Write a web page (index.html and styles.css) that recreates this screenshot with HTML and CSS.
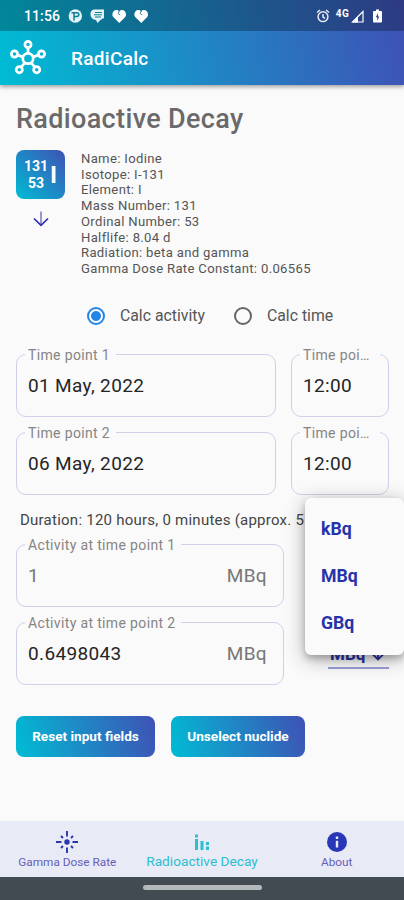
FILE: index.html
```html
<!DOCTYPE html>
<html lang="en">
<head>
<meta charset="utf-8">
<title>RadiCalc</title>
<link rel="stylesheet" href="styles.css">
</head>
<body>
<div class="app">
  <header class="top">
    <div class="status">
      <span class="clock">11:56</span>
      <svg class="notices" width="82" height="16" viewBox="0 0 82 16">
        <circle cx="7.3" cy="8" r="6.7" fill="#e4f3f6"/>
        <path d="M6 12.500V4.800M3.500 4.800H9a1.800 1.800 0 0 1 0 3.600H6" fill="none" stroke="#0d7f95" stroke-width="1.500"/>
        <path d="M26 1.5h10v8.500l-3 1.500-3.500 3.500-1.500-3c-7 0-7-10.500-2-10.500z" fill="#e4f3f6"/>
        <path d="M27 4.500h7M26 6.800h8M27 9h6" stroke="#0d7f95" stroke-width="1"/>
        <path d="M51.200 15l-6-6c-3-4 2.500-9.500 6-5.500 3.500-4 9 1.500 6 5.500z" fill="#fff"/>
        <path d="M73.200 15l-6-6c-3-4 2.500-9.500 6-5.500 3.500-4 9 1.500 6 5.500z" fill="#fff"/>
        <path d="M51.200 3l-1 2.500 2 1.500M73.200 3l-1 2.500 2 1.500" fill="none" stroke="#247d9b" stroke-width=".9"/>
      </svg>
      <svg class="alarm" width="14" height="14" viewBox="0 0 14 14" fill="none" stroke="#e8eaf6" stroke-width="1.500">
        <circle cx="7" cy="7.700" r="4.900"/><path d="M1 3.500l3-2.500M13 3.500l-3-2.500M7 5v3l2 1.300"/>
      </svg>
      <span class="net">4G</span>
      <svg class="signal" width="13" height="13" viewBox="0 0 13 13">
        <path d="M1.500 12L12 1.500V12z" fill="none" stroke="#fff" stroke-width="1.200"/><path d="M1 12.500L7 6.500v6z" fill="#fff"/>
      </svg>
      <svg class="battery" width="9" height="14" viewBox="0 0 9 14">
        <path d="M1 2h2V.5h3V2h2q1 0 1 1v9.500q0 1-1 1H1q-1 0-1-1V3q0-1 1-1z" fill="#fff"/><path d="M5 4L2.800 8.200h1.500V12l2-4.500H5z" fill="#2f4185"/>
      </svg>
    </div>
    <div class="bar">
      <svg class="logo" width="36" height="36" viewBox="0 0 36 36" fill="none" stroke="#fff" stroke-width="2.700">
        <circle cx="18" cy="18.500" r="5.200"/>
        <circle cx="18" cy="4.500" r="3.100"/><circle cx="4.500" cy="14" r="3.100"/><circle cx="31.500" cy="14" r="3.100"/>
        <circle cx="9.300" cy="29.700" r="3.100"/><circle cx="26.700" cy="29.700" r="3.100"/>
        <path d="M18 7.800v5.600M7.600 15.100l5.500 1.800M28.400 15.100L22.900 16.900M11.200 27.100l3.700-4.500M24.800 27.100l-3.700-4.500"/>
      </svg>
      <span class="brand">RadiCalc</span>
    </div>
  </header>

  <main class="page">
    <h1>Radioactive Decay</h1>
    <section class="nuclide">
      <div class="pick">
        <div class="tile"><div class="nums"><span>131</span><span>53</span></div><b>I</b></div>
        <svg width="16" height="16" viewBox="0 0 16 16" fill="none" stroke-width="1.700"><path d="M8 .5v13" stroke="#8583cf"/><path d="M1 7.500l7 6.800 7-6.800" stroke="#2e2eb3"/></svg>
      </div>
      <ul class="facts">
        <li>Name: Iodine</li>
        <li>Isotope: I-131</li>
        <li>Element: I</li>
        <li>Mass Number: 131</li>
        <li>Ordinal Number: 53</li>
        <li>Halflife: 8.04 d</li>
        <li>Radiation: beta and gamma</li>
        <li>Gamma Dose Rate Constant: 0.06565</li>
      </ul>
    </section>

    <div class="modes">
      <span class="radio on"></span><span class="mode first">Calc activity</span>
      <span class="radio"></span><span class="mode">Calc time</span>
    </div>

    <div class="row">
      <fieldset class="date"><legend>Time point 1</legend><div class="value">01 May, 2022</div></fieldset>
      <fieldset class="time"><legend>Time poi…</legend><div class="value">12:00</div></fieldset>
    </div>
    <div class="row">
      <fieldset class="date"><legend>Time point 2</legend><div class="value">06 May, 2022</div></fieldset>
      <fieldset class="time"><legend>Time poi…</legend><div class="value">12:00</div></fieldset>
    </div>

    <p class="duration">Duration: 120 hours, 0 minutes (approx. 5</p>

    <div class="row">
      <fieldset class="activity"><legend>Activity at time point 1</legend><div class="value hint"><span>1</span><span class="unit">MBq</span></div></fieldset>
    </div>
    <div class="row">
      <fieldset class="activity"><legend>Activity at time point 2</legend><div class="value"><span>0.6498043</span><span class="unit">MBq</span></div></fieldset>
      <div class="select">
        <span>MBq</span>
        <svg width="14" height="14" viewBox="0 0 14 14" fill="none" stroke="#2733a8" stroke-width="1.800"><path d="M7 0v12M1 6.500l6 6 6-6"/></svg>
        <div class="menu"><span>kBq</span><span>MBq</span><span>GBq</span></div>
      </div>
    </div>

    <div class="actions">
      <div class="btn reset">Reset input fields</div>
      <div class="btn unselect">Unselect nuclide</div>
    </div>
  </main>

  <nav class="tabs">
    <div class="tab">
      <svg width="24" height="24" viewBox="0 0 24 24" fill="none" stroke="#2737ad" stroke-width="1.900"><circle cx="12" cy="12" r="2.700" fill="#2737ad" stroke="none"/><path d="M12 1v5.500M12 17.500V23M1 12h5.500M17.500 12H23M6 6l2 2M18 6l-2 2M6 18l2-2M18 18l-2-2"/></svg>
      <span class="t1">Gamma Dose Rate</span>
    </div>
    <div class="tab current">
      <svg width="24" height="24" viewBox="0 0 24 24" fill="#2bbfd0"><path d="M5 9h3v11H5zM5 4.500h3v3H5zM10.500 11h3v9h-3zM16 12h3v3h-3zM16 16.500h3V20h-3z"/></svg>
      <span class="t2">Radioactive Decay</span>
    </div>
    <div class="tab">
      <svg width="24" height="24" viewBox="0 0 24 24"><circle cx="12" cy="12" r="10" fill="#2737b5"/><path d="M10.800 6.500h2.400v2.400h-2.400zM10.800 10.800h2.400v6.700h-2.400z" fill="#e8eaf6"/></svg>
      <span class="t3">About</span>
    </div>
  </nav>
  <footer class="gesture"><span></span></footer>
</div>
</body>
</html>
```
FILE: styles.css
```css
* { box-sizing: border-box; }
body { margin: 0; font-family: Roboto, "Liberation Sans", sans-serif; }
.app { width: 404px; height: 900px; display: flex; flex-direction: column; background: #fafafa; overflow: hidden; }

.top { flex: none; height: 85px; background: linear-gradient(78deg, #00bcd4, #3f51b5); box-shadow: 0 2px 4px rgba(0,0,0,.35); color: #fff; }
.status { height: 31px; background: rgba(0,0,0,.27); display: flex; align-items: center; padding: 1px 22px 0 24px; }
.clock { width: 44px; font-size: 14px; font-weight: 500; letter-spacing: .1px; white-space: nowrap; }
.alarm { margin-left: auto; }
.net { font-size: 10px; font-weight: 700; margin: -6px 2px 0 6px; letter-spacing: .3px; }
.battery { margin-left: 9px; }
.bar { height: 54px; display: flex; align-items: center; padding: 0 10px; }
.brand { margin: 1px 0 0 25px; font-size: 19px; font-weight: 500; letter-spacing: .3px; }

.page { flex: 1; padding: 0 15px 0 16px; display: flex; flex-direction: column; }
h1 { margin: 18px 0 0; height: 33px; font-size: 27px; line-height: 33px; font-weight: 500; letter-spacing: .35px; color: #6a6a6a; white-space: nowrap; }
.nuclide { margin-top: 14px; display: flex; gap: 16px; }
.pick { width: 49px; display: flex; flex-direction: column; align-items: center; gap: 12px; }
.tile { width: 49px; height: 49px; border-radius: 8px; background: linear-gradient(45deg, #00bcd4, #3f51b5); color: #fff; display: flex; align-items: center; justify-content: center; gap: 2px; }
.nums { display: flex; flex-direction: column; align-items: center; font-size: 14px; line-height: 17px; font-weight: 700; }
.tile b { font-size: 24px; line-height: 24px; }
.facts { list-style: none; margin: 1px 0 0; padding: 0; font-size: 13.1px; line-height: 15.7px; letter-spacing: .33px; color: #555; white-space: nowrap; }

.modes { display: flex; align-items: center; height: 20px; margin: 29px 0 0 71px; }
.radio { width: 18px; height: 18px; border: 2px solid #666; border-radius: 50%; }
.radio.on { border-color: #2484e8; background: radial-gradient(circle, #2484e8 4.5px, transparent 5.300px); }
.mode { font-size: 15.8px; margin-left: 15px; color: #555; white-space: nowrap; }
.mode.first { width: 114px; }

.row { display: flex; gap: 15px; height: 70px; margin-top: 8px; }
.modes + .row { margin-top: 21px; }
fieldset { flex: none; min-width: 0; margin: 0; height: 70px; padding: 0 8px; border: 1px solid #cfd0ea; border-radius: 10px; }
.date { width: 260px; }
.time { width: 98px; }
.activity { width: 268px; }
legend { margin: 0; padding: 0 6px 0 3px; height: 16px; line-height: 16px; font-size: 14px; letter-spacing: .35px; color: #858585; white-space: nowrap; }
.time legend { width: 80px; padding-right: 0; }
.value { display: flex; justify-content: space-between; padding: 11px 8px 0 3px; line-height: 24px; font-size: 19px; letter-spacing: .35px; color: #252525; white-space: nowrap; }
.value.hint, .unit { color: #777; }
.duration { margin: 17px 0 0 4px; height: 16px; line-height: 16px; font-size: 15px; letter-spacing: .24px; color: #444; white-space: nowrap; }
.duration + .row { margin-top: 9px; }

.select { position: relative; align-self: flex-start; margin: 27px 0 0 29px; width: 61px; height: 27px; border-bottom: 2px solid #9a9ed8; display: flex; justify-content: space-between; align-items: center; padding: 0 4px 1px 2px; color: #2733a8; font-size: 17px; font-weight: 700; }
.menu { position: absolute; z-index: 2; left: -23px; top: -144px; width: 99px; height: 157px; padding-left: 16px; border-radius: 6px; background: #fafafa; box-shadow: 0 4px 20px rgba(0,0,0,.32), 0 4px 6px rgba(0,0,0,.2); padding-top: 8px; font-size: 17.7px; line-height: 47px; color: #2733a8; display: flex; flex-direction: column; }

.actions { display: flex; gap: 16px; margin-top: 31px; }
.btn { height: 41px; border-radius: 8px; display: flex; align-items: center; justify-content: center; background: linear-gradient(73deg, #00bcd4, #3f51b5); color: #fff; font-size: 13.600px; font-weight: 700; white-space: nowrap; }
.reset { width: 139px; }
.unselect { width: 134px; }

.tabs { flex: none; height: 56px; background: #e8eaf6; display: flex; }
.tab { flex: 1; display: flex; flex-direction: column; align-items: center; padding-top: 9px; color: #655fb9; font-size: 11.8px; line-height: 16px; white-space: nowrap; }
.current { color: #2bbfd0; font-size: 13.700px; line-height: 15px; }
.gesture { flex: none; height: 23px; background: #434b52; display: flex; justify-content: center; padding-top: 8px; }
.gesture span { width: 119px; height: 5px; border-radius: 3px; background: #b3b8bb; }
```
